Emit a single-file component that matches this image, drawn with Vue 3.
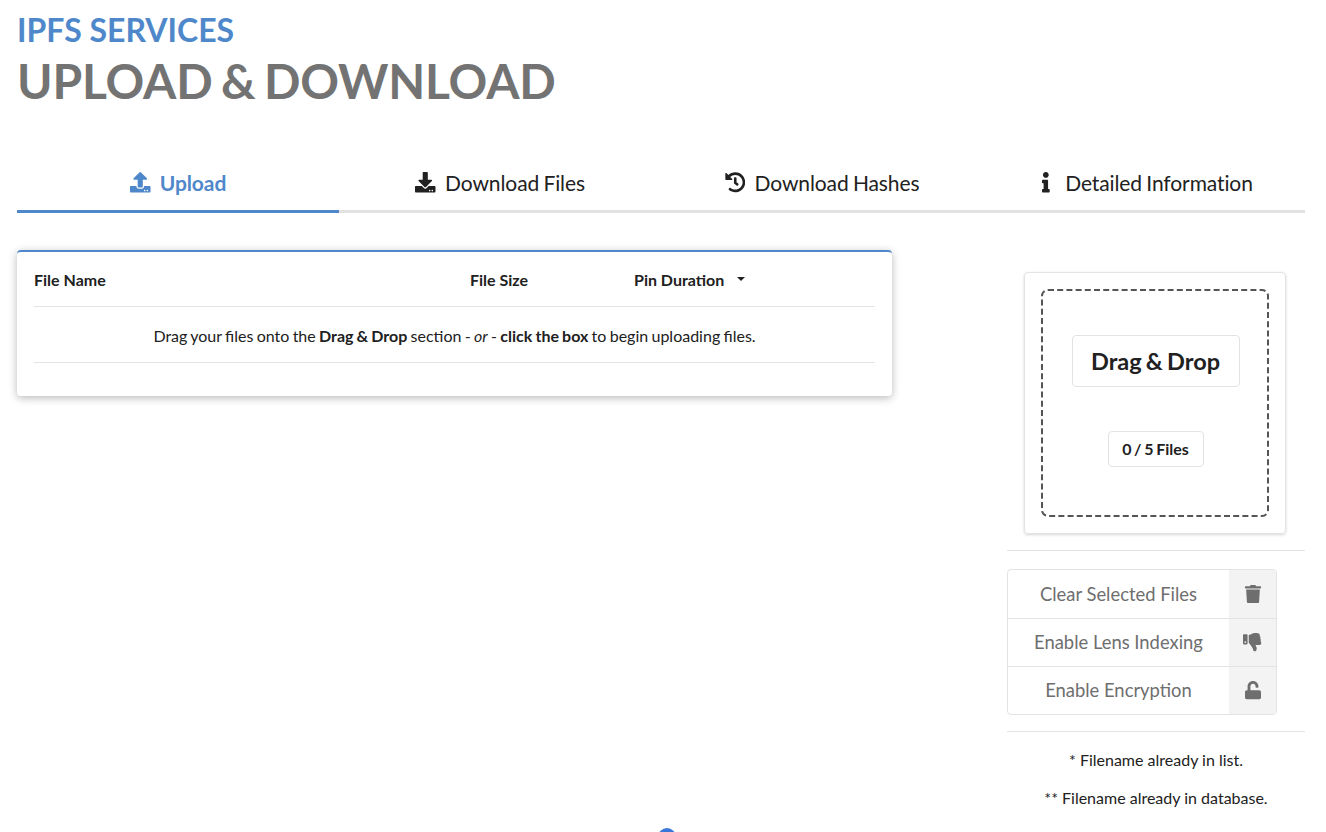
<script setup>
const tabs = [
  { label: 'Upload', icon: 'upload', active: true },
  { label: 'Download Files', icon: 'download' },
  { label: 'Download Hashes', icon: 'history' },
  { label: 'Detailed Information', icon: 'info' },
]
const icons = {
  upload: { box: '0 0 512 512', d: 'M296 384h-80c-13.3 0-24-10.7-24-24V192h-87.7c-17.8 0-26.7-21.5-14.1-34.1L242.3 5.7c7.5-7.5 19.8-7.5 27.3 0l152.2 152.2c12.6 12.6 3.7 34.1-14.1 34.1H320v168c0 13.3-10.7 24-24 24zm216-8v112c0 13.3-10.7 24-24 24H24c-13.3 0-24-10.7-24-24V376c0-13.3 10.7-24 24-24h136v8c0 30.9 25.1 56 56 56h80c30.9 0 56-25.1 56-56v-8h136c13.3 0 24 10.7 24 24zm-124 88c0-11-9-20-20-20s-20 9-20 20 9 20 20 20 20-9 20-20zm64 0c0-11-9-20-20-20s-20 9-20 20 9 20 20 20 20-9 20-20z' },
  download: { box: '0 0 512 512', d: 'M216 0h80c13.3 0 24 10.7 24 24v168h87.7c17.8 0 26.7 21.5 14.1 34.1L269.7 378.3c-7.5 7.5-19.8 7.5-27.3 0L90.1 226.1c-12.6-12.6-3.7-34.1 14.1-34.1H192V24c0-13.3 10.7-24 24-24zm296 376v112c0 13.3-10.7 24-24 24H24c-13.3 0-24-10.7-24-24V376c0-13.3 10.7-24 24-24h146.7l49 49c20.1 20.1 52.5 20.1 72.6 0l49-49H488c13.3 0 24 10.7 24 24zm-124 88c0-11-9-20-20-20s-20 9-20 20 9 20 20 20 20-9 20-20zm64 0c0-11-9-20-20-20s-20 9-20 20 9 20 20 20 20-9 20-20z' },
  history: { box: '0 0 512 512', d: 'M504 255.531c.253 136.64-111.18 248.372-247.82 248.468-59.015.042-113.223-20.53-155.822-54.911-11.077-8.94-11.905-25.541-1.839-35.607l11.267-11.267c8.609-8.609 22.353-9.551 31.891-1.984C173.062 425.135 212.781 440 256 440c101.705 0 184-82.311 184-184 0-101.705-82.311-184-184-184-48.814 0-93.149 18.969-126.068 49.932l50.754 50.754c10.08 10.08 2.941 27.314-11.313 27.314H24c-8.837 0-16-7.163-16-16V38.627c0-14.254 17.234-21.393 27.314-11.314l49.372 49.372C129.209 34.136 189.552 8 256 8c136.81 0 247.747 110.78 248 247.531zm-180.912 78.784l9.823-12.63c8.138-10.463 6.253-25.542-4.21-33.679L288 256.349V152c0-13.255-10.745-24-24-24h-16c-13.255 0-24 10.745-24 24v135.651l65.409 50.874c10.463 8.137 25.541 6.253 33.679-4.21z' },
  info: { box: '0 0 192 512', d: 'M20 424.229h20V279.771H20c-11.046 0-20-8.954-20-20V212c0-11.046 8.954-20 20-20h112c11.046 0 20 8.954 20 20v212.229h20c11.046 0 20 8.954 20 20V492c0 11.046-8.954 20-20 20H20c-11.046 0-20-8.954-20-20v-47.771c0-11.046 8.954-20 20-20zM96 0C56.235 0 24 32.235 24 72s32.235 72 72 72 72-32.235 72-72S135.764 0 96 0z' },
  trash: { box: '0 0 448 512', d: 'M432 32H312l-9.4-18.7A24 24 0 0 0 281.1 0H166.8a23.72 23.72 0 0 0-21.4 13.3L136 32H16A16 16 0 0 0 0 48v32a16 16 0 0 0 16 16h416a16 16 0 0 0 16-16V48a16 16 0 0 0-16-16zM53.2 467a48 48 0 0 0 47.9 45h245.8a48 48 0 0 0 47.9-45L416 128H32z' },
  thumbs: { box: '0 0 512 512', d: 'M0 56v240c0 13.255 10.745 24 24 24h80c13.255 0 24-10.745 24-24V56c0-13.255-10.745-24-24-24H24C10.745 32 0 42.745 0 56zm40 200c0-13.255 10.745-24 24-24s24 10.745 24 24-10.745 24-24 24-24-10.745-24-24zm272 256c-20.183 0-29.485-39.293-33.931-57.795-5.206-21.666-10.589-44.07-25.393-58.902-32.469-32.524-49.503-73.967-89.117-113.111a11.98 11.98 0 0 1-3.558-8.521V59.901c0-6.541 5.243-11.878 11.783-11.998 15.831-.29 36.694-9.079 52.651-16.178C256.189 17.598 295.709.017 343.995 0h2.844c42.777 0 93.363.413 113.774 29.737 8.392 12.057 10.446 27.034 6.148 44.632 16.312 17.053 25.063 48.863 16.382 74.757 17.544 23.432 19.143 56.132 9.308 79.469l.11.11c11.893 11.949 19.523 31.259 19.439 49.197-.156 30.352-26.157 58.098-59.553 58.098H350.723C358.03 364.34 384 388.132 384 430.548 384 504 336 512 312 512z' },
  unlock: { box: '0 0 448 512', d: 'M400 256H152V152.9c0-39.6 31.7-72.5 71.3-72.9 40-.4 72.7 32.1 72.7 72v16c0 13.3 10.7 24 24 24h32c13.3 0 24-10.7 24-24v-16C376 68 307.5-.3 223.5 0 139.5.3 72 69.5 72 153.5V256H48c-26.5 0-48 21.5-48 48v160c0 26.5 21.5 48 48 48h352c26.5 0 48-21.5 48-48V304c0-26.5-21.5-48-48-48z' },
}
const actions = [
  { label: 'Clear Selected Files', icon: 'trash' },
  { label: 'Enable Lens Indexing', icon: 'thumbs' },
  { label: 'Enable Encryption', icon: 'unlock' },
]
</script>

<template>
  <div class="page">
    <header class="head">
      <div class="sub">IPFS SERVICES</div>
      <h1 class="title">UPLOAD &amp; DOWNLOAD</h1>
    </header>

    <nav class="tabs">
      <a v-for="t in tabs" :key="t.label" class="tab" :class="{ active: t.active }">
        <span class="tab-icon">
          <svg :viewBox="icons[t.icon].box"><path :d="icons[t.icon].d" fill="currentColor" /></svg>
        </span>
        <span>{{ t.label }}</span>
      </a>
    </nav>

    <div class="columns">
      <section class="table-card">
        <div class="row head-row">
          <div class="c-name">File Name</div>
          <div class="c-size">File Size</div>
          <div class="c-pin">Pin Duration <i class="caret"></i></div>
        </div>
        <div class="row msg">
          <span>Drag your files onto the <b>Drag &amp; Drop</b> section - <em>or</em> - <b>click the box</b> to begin uploading files.</span>
        </div>
      </section>

      <aside class="side">
        <div class="drop-card">
          <div class="dashed">
            <svg class="dash-frame" viewBox="0 0 228 228">
              <rect x="1" y="1" width="226" height="226" rx="6" fill="none" stroke="#555" stroke-width="2" stroke-dasharray="6 3.2" />
            </svg>
            <div class="drag-label">Drag &amp; Drop</div>
            <div class="count-label">0 / 5 Files</div>
          </div>
        </div>
        <div class="divider first"></div>
        <div class="actions">
          <div v-for="a in actions" :key="a.label" class="action">
            <div class="action-text">{{ a.label }}</div>
            <div class="action-icon">
              <svg :viewBox="icons[a.icon].box"><path :d="icons[a.icon].d" fill="currentColor" /></svg>
            </div>
          </div>
        </div>
        <div class="divider second"></div>
        <p class="note">* Filename already in list.</p>
        <p class="note">** Filename already in database.</p>
      </aside>
    </div>

    <div class="dot"></div>
  </div>
</template>

<style>
html, body { margin: 0; background: #fff; overflow: hidden; }
</style>

<style scoped>
.page {
  position: relative;
  box-sizing: border-box;
  width: 1326px;
  height: 832px;
  overflow: hidden;
  padding: 12px 21px 0 17px;
  font-family: Lato, "Liberation Sans", sans-serif;
  color: #212121;
  background: #fff;
}
.sub {
  font-size: 32px;
  line-height: 36px;
  font-weight: 700;
  color: #4f88ca;
}
.title {
  margin: 5px 0 0;
  font-size: 48px;
  line-height: 56px;
  font-weight: 700;
  letter-spacing: -0.2px;
  word-spacing: -3px;
  color: #737373;
}
.tabs {
  display: flex;
  margin-top: 48px;
  border-bottom: 3px solid #e2e2e2;
}
.tab {
  flex: 1;
  height: 51px;
  padding-bottom: 2px;
  margin-bottom: -3px;
  border-bottom: 3px solid transparent;
  display: flex;
  align-items: center;
  justify-content: center;
  gap: 9px;
  font-size: 21px;
  letter-spacing: -0.1px;
  word-spacing: -1px;
}
.tab.active {
  color: #4f88ca;
  font-weight: 700;
  border-bottom-color: #4f88ca;
}
.tab-icon {
  width: 21px;
  height: 21px;
  display: flex;
  justify-content: center;
}
.tab-icon svg { height: 20.5px; }
.columns {
  display: flex;
  align-items: flex-start;
  margin-top: 37px;
}
.table-card {
  box-sizing: border-box;
  width: 875px;
  height: 146px;
  padding: 0 17px;
  border-top: 2px solid #4f88ca;
  border-radius: 4px;
  background: #fff;
  box-shadow: 0 2px 8px rgba(0, 0, 0, 0.28);
}
.row {
  display: flex;
  align-items: center;
  height: 54px;
  border-bottom: 1px solid #e3e3e3;
  font-size: 16px;
}
.head-row { font-weight: 700; }
.c-name { width: 436px; }
.c-size { width: 164px; }
.c-pin { display: flex; align-items: center; gap: 13px; }
.caret {
  width: 0;
  height: 0;
  border-left: 4.5px solid transparent;
  border-right: 4.5px solid transparent;
  border-top: 4.5px solid #212121;
}
.msg {
  justify-content: center;
  height: 54px;
  padding-top: 1px;
  word-spacing: -0.8px;
}
.side {
  box-sizing: border-box;
  width: 298px;
  margin-left: 115px;
  padding-top: 22px;
}
.drop-card {
  box-sizing: border-box;
  width: 262px;
  height: 262px;
  margin-left: 17px;
  padding: 16px;
  border: 1px solid #e3e3e3;
  border-radius: 4px;
  box-shadow: 0 1px 3px rgba(0, 0, 0, 0.16);
}
.dashed {
  position: relative;
  box-sizing: border-box;
  height: 228px;
  padding-top: 46px;
  display: flex;
  flex-direction: column;
  align-items: center;
  gap: 44px;
}
.dash-frame {
  position: absolute;
  left: 0;
  top: 0;
  width: 228px;
  height: 228px;
}
.drag-label {
  box-sizing: border-box;
  width: 168px;
  height: 52px;
  margin-left: 1px;
  border: 1px solid #e3e3e3;
  border-radius: 4px;
  display: flex;
  align-items: center;
  justify-content: center;
  font-size: 23.5px;
  font-weight: 700;
  word-spacing: -1.5px;
}
.count-label {
  box-sizing: border-box;
  width: 96px;
  height: 36px;
  margin-left: 1px;
  padding-bottom: 2px;
  border: 1px solid #e3e3e3;
  border-radius: 4px;
  display: flex;
  align-items: center;
  justify-content: center;
  font-size: 16px;
  font-weight: 700;
  word-spacing: -1.2px;
}
.divider { height: 1px; background: #e3e3e3; }
.divider.first { margin-top: 16px; }
.divider.second { margin-top: 16px; }
.actions {
  box-sizing: border-box;
  width: 270px;
  margin-top: 18px;
  border: 1px solid #e3e3e3;
  border-radius: 4px;
  overflow: hidden;
}
.action {
  box-sizing: border-box;
  display: flex;
  height: 48px;
  color: #6e6e6e;
  font-size: 18.4px;
}
.action + .action { border-top: 1px solid #e3e3e3; }
.action + .action .action-text { padding-bottom: 2px; }
.action-text {
  flex: 1;
  display: flex;
  align-items: center;
  justify-content: center;
}
.action-icon {
  width: 47px;
  background: #f3f3f3;
  display: flex;
  align-items: center;
  justify-content: center;
}
.action-icon svg { height: 18.3px; }
.note {
  margin: 0;
  text-align: center;
  font-size: 16px;
  line-height: 18px;
  padding-top: 20px;
}
.divider.second + .note { padding-top: 19px; }
.dot {
  position: absolute;
  left: 658px;
  top: 828px;
  width: 18px;
  height: 18px;
  border-radius: 50%;
  background: #3a78d8;
}
</style>
